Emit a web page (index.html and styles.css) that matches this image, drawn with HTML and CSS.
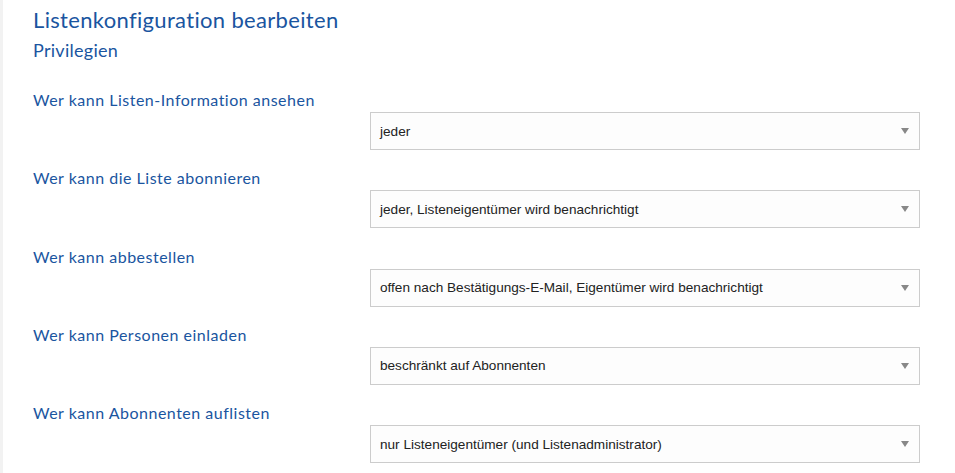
FILE: index.html
```html
<!DOCTYPE html>
<html lang="de">
<head>
<meta charset="utf-8">
<title>Listenkonfiguration bearbeiten</title>
<link rel="stylesheet" href="styles.css">
</head>
<body>
<div class="page">
  <h1 class="title">Listenkonfiguration bearbeiten</h1>
  <h2 class="subtitle">Privilegien</h2>
  <div class="rows">
    <div class="row">
      <label class="label">Wer kann Listen-Information ansehen</label>
      <div class="select"><span class="value">jeder</span><span class="caret"></span></div>
    </div>
    <div class="row">
      <label class="label">Wer kann die Liste abonnieren</label>
      <div class="select"><span class="value">jeder, Listeneigentümer wird benachrichtigt</span><span class="caret"></span></div>
    </div>
    <div class="row">
      <label class="label">Wer kann abbestellen</label>
      <div class="select"><span class="value">offen nach Bestätigungs-E-Mail, Eigentümer wird benachrichtigt</span><span class="caret"></span></div>
    </div>
    <div class="row">
      <label class="label">Wer kann Personen einladen</label>
      <div class="select"><span class="value">beschränkt auf Abonnenten</span><span class="caret"></span></div>
    </div>
    <div class="row">
      <label class="label">Wer kann Abonnenten auflisten</label>
      <div class="select"><span class="value">nur Listeneigentümer (und Listenadministrator)</span><span class="caret"></span></div>
    </div>
  </div>
</div>
</body>
</html>
```
FILE: styles.css
```css
html, body {
  margin: 0;
  padding: 0;
  background: #ffffff;
}
body {
  border-left: 3px solid #f2f2f2;
  min-height: 473px;
  box-sizing: border-box;
  font-family: "Lato", "Open Sans", sans-serif;
  color: #1a55a0;
}
.page {
  padding: 6px 0 0 30px;
}
.title {
  margin: 0;
  font-size: 22px;
  line-height: 28px;
  font-weight: 400;
  letter-spacing: 0.33px;
  color: #1a55a0;
}
.subtitle {
  margin: 4px 0 0 0;
  font-size: 18px;
  line-height: 24px;
  font-weight: 400;
  letter-spacing: 0.28px;
  color: #1a55a0;
}
.rows {
  margin-top: 27px;
}
.row {
  display: flex;
  flex-direction: column;
  margin-bottom: 17.25px;
}
.label {
  display: block;
  font-size: 16px;
  line-height: 22px;
  letter-spacing: 0.5px;
  color: #1a55a0;
}
.select {
  margin: 1px 0 0 337px;
  width: 550px;
  height: 38px;
  box-sizing: border-box;
  border: 1px solid #cccccc;
  background: #fdfdfd;
  display: flex;
  align-items: center;
  justify-content: space-between;
  padding: 0 10px 0 9px;
  font-family: "Liberation Sans", Arial, sans-serif;
  font-size: 13.6px;
  color: #222222;
}
.caret {
  width: 0;
  height: 0;
  border-left: 4px solid transparent;
  border-right: 4px solid transparent;
  border-top: 6px solid #888888;
}
```
